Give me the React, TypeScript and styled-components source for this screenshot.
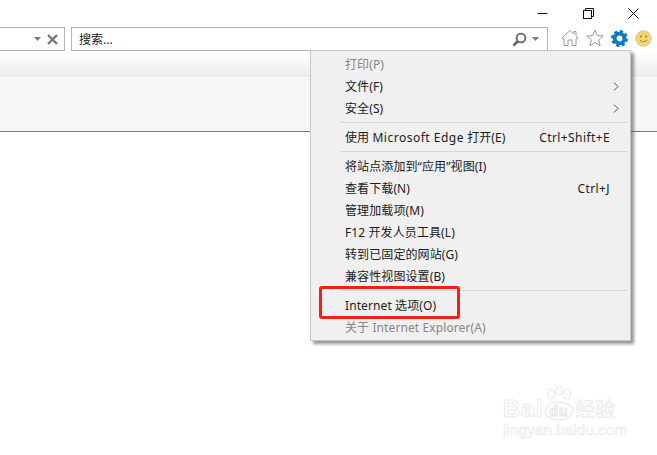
import React from 'react'
import styled, { createGlobalStyle } from 'styled-components'

const GlobalStyle = createGlobalStyle`
  html, body {
    margin: 0;
    padding: 0;
    background: #fff;
  }
  body {
    font-family: "Noto Sans", "Noto Sans CJK SC", sans-serif;
  }
`

const Page = styled.div`
  position: relative;
  width: 657px;
  height: 455px;
  overflow: hidden;
  background: #fff;
`

const WindowBar = styled.div`
  height: 27px;
  display: flex;
  justify-content: flex-end;
  align-items: flex-start;
  padding-right: 1px;
  gap: 0.5px;
`

const WindowButton = styled.button`
  width: 45px;
  height: 27px;
  padding: 0;
  border: 0;
  background: none;
  display: flex;
  align-items: center;
  justify-content: center;
  svg {
    display: block;
  }
`

const NavRow = styled.div`
  height: 24px;
  display: flex;
  align-items: stretch;
`

const AddressBox = styled.div`
  width: 65px;
  box-sizing: border-box;
  border: 1px solid #b4b4b4;
  border-left: 0;
  display: flex;
  align-items: center;
  justify-content: flex-end;
  gap: 6px;
  padding-right: 6px;
  margin-right: 6px;
`

const SearchBox = styled.div`
  width: 477px;
  box-sizing: border-box;
  border: 1px solid #b4b4b4;
  display: flex;
  align-items: center;
  padding: 0 8px 0 7px;
  gap: 5px;
`

const SearchText = styled.span`
  flex: 1;
  font-size: 12px;
  color: #1a1a1a;
`

const ToolIcons = styled.div`
  flex: 1;
  display: flex;
  align-items: center;
  padding: 0 0 2px 13px;
  gap: 7px;
`

const TabStrip = styled.div`
  height: 26px;
  background: linear-gradient(#ffffff, #ececec);
  border-bottom: 1px solid #fafafa;
`

const ContentBand = styled.div`
  height: 53px;
  background: #f6f6f6;
  border-bottom: 1px solid #7a7a7a;
`

const Menu = styled.div`
  position: absolute;
  left: 310px;
  top: 50px;
  width: 321px;
  height: 291px;
  box-sizing: border-box;
  padding: 2px 2px 0 30px;
  background: #f0f0f0;
  border: 1px solid #c6c6c6;
  box-shadow: 3px 3px 3px rgba(60, 60, 60, 0.55);
`

const MenuRow = styled.div<{ $disabled?: boolean }>`
  height: 22px;
  display: flex;
  align-items: center;
  justify-content: space-between;
  padding: 0 18px 0 4px;
  font-size: 12px;
  letter-spacing: 0.1px;
  white-space: nowrap;
  color: ${p => (p.$disabled ? '#868686' : '#1c1c1c')};
`

const Shortcut = styled.span`
  letter-spacing: 0.4px;
`

const WideLatin = styled.span`
  letter-spacing: 0.5px;
`

const Separator = styled.div`
  height: 1px;
  margin: 3px 0;
  background: #d7d7d7;
`

const Arrow = styled.svg`
  margin-right: -9px;
`

const Highlight = styled.div`
  position: absolute;
  left: 8px;
  top: 235px;
  width: 141px;
  height: 33px;
  box-sizing: border-box;
  border: 3px solid #f0201a;
  border-radius: 3px;
`

const Watermark = styled.div`
  position: absolute;
  left: 503px;
  top: 387px;
  width: 125px;
  color: #fff;
  -webkit-text-stroke: 1px #ebebeb;
`

const WatermarkTop = styled.div`
  display: flex;
  align-items: flex-end;
  height: 35px;
  font-family: "Liberation Sans", sans-serif;
  font-weight: 700;
  font-size: 24px;
  line-height: 26px;
  letter-spacing: 1px;
`

const WatermarkCjk = styled.span`
  font-family: "Noto Sans CJK SC", sans-serif;
  font-size: 20px;
  font-weight: 400;
  letter-spacing: 0;
  -webkit-text-stroke: 0.7px #e8e8e8;
`

const WatermarkUrl = styled.div`
  font-family: "Liberation Sans", sans-serif;
  font-size: 15px;
  line-height: 16px;
  letter-spacing: 0.2px;
  -webkit-text-stroke: 0.6px #e8e8e8;
`

const MenuArrow = () => (
  <Arrow width="6" height="9" viewBox="0 0 6 9" fill="none" stroke="#555" strokeWidth="1">
    <path d="M1 0.5 L5 4.5 L1 8.5" />
  </Arrow>
)

const Caret = () => (
  <svg width="7" height="4" viewBox="0 0 7 4" fill="#7c7c7c">
    <path d="M0 0 H7 L3.5 4 Z" />
  </svg>
)

const App: React.FC = () => {
  return (
    <Page>
      <GlobalStyle />
      <WindowBar>
        <WindowButton aria-label="最小化">
          <svg width="11" height="11" viewBox="0 0 11 11" stroke="#111" fill="none">
            <path d="M0.5 5.5 H10.5" />
          </svg>
        </WindowButton>
        <WindowButton aria-label="还原">
          <svg width="11" height="11" viewBox="0 0 11 11" stroke="#111" fill="none">
            <rect x="0.5" y="2.5" width="8" height="8" />
            <path d="M2.5 2.5 V0.5 H10.5 V8.5 H8.5" />
          </svg>
        </WindowButton>
        <WindowButton aria-label="关闭">
          <svg width="11" height="11" viewBox="0 0 11 11" stroke="#111" fill="none">
            <path d="M0.5 0.5 L10.5 10.5 M10.5 0.5 L0.5 10.5" />
          </svg>
        </WindowButton>
      </WindowBar>

      <NavRow>
        <AddressBox>
          <Caret />
          <svg width="11" height="11" viewBox="0 0 11 11" stroke="#777" strokeWidth="2.4" fill="none">
            <path d="M1 1 L10 10 M10 1 L1 10" />
          </svg>
        </AddressBox>
        <SearchBox>
          <SearchText>搜索...</SearchText>
          <svg width="15" height="15" viewBox="0 0 15 15" fill="none" stroke="#666">
            <circle cx="9" cy="6" r="4.4" strokeWidth="1.9" />
            <path d="M6 9 L1.5 13.5" strokeWidth="2.6" />
          </svg>
          <Caret />
        </SearchBox>
        <ToolIcons>
          <svg width="18" height="18" viewBox="0 0 18 18" fill="#fff" stroke="#9a9a9a">
            <path d="M1 9 L9 1.5 L13 5 V2.5 H15 V7 L17 9 L15 10 V16.5 H11 V11 H7 V16.5 H3 V10 Z" />
          </svg>
          <svg width="18" height="18" viewBox="0 0 18 18" fill="#fff" stroke="#9a9a9a">
            <path d="M9 1 L11.3 6.6 L17.2 7 L12.7 10.8 L14.1 16.7 L9 13.6 L3.9 16.7 L5.3 10.8 L0.8 7 L6.7 6.6 Z" />
          </svg>
          <svg width="17" height="17" viewBox="0 0 17 17" fill="none">
            <circle cx="8.5" cy="8.5" r="4.8" stroke="#0f79c9" strokeWidth="3.8" />
            <circle
              cx="8.5"
              cy="8.5"
              r="7"
              stroke="#0f79c9"
              strokeWidth="2.8"
              strokeDasharray="3.2 2.3"
            />
          </svg>
          <svg width="17" height="17" viewBox="0 0 17 17">
            <circle cx="8.5" cy="8.5" r="7.7" fill="#f3d768" stroke="#c9c4a4" />
            <circle cx="6" cy="6.5" r="1.1" fill="#9a8a3a" />
            <circle cx="11" cy="6.5" r="1.1" fill="#9a8a3a" />
            <path d="M4.8 10 Q8.5 13.6 12.2 10" fill="none" stroke="#9a8a3a" />
          </svg>
        </ToolIcons>
      </NavRow>

      <TabStrip />
      <ContentBand />

      <Menu>
        <MenuRow $disabled>打印(P)</MenuRow>
        <MenuRow>
          文件(F)
          <MenuArrow />
        </MenuRow>
        <MenuRow>
          安全(S)
          <MenuArrow />
        </MenuRow>
        <Separator />
        <MenuRow>
          <span>
            使用 <WideLatin>Microsoft Edge</WideLatin> 打开(E)
          </span>
          <Shortcut>Ctrl+Shift+E</Shortcut>
        </MenuRow>
        <Separator />
        <MenuRow>将站点添加到“应用”视图(I)</MenuRow>
        <MenuRow>
          查看下载(N)
          <Shortcut>Ctrl+J</Shortcut>
        </MenuRow>
        <MenuRow>管理加载项(M)</MenuRow>
        <MenuRow>F12 开发人员工具(L)</MenuRow>
        <MenuRow>转到已固定的网站(G)</MenuRow>
        <MenuRow>兼容性视图设置(B)</MenuRow>
        <Separator />
        <MenuRow>Internet 选项(O)</MenuRow>
        <MenuRow $disabled>关于 Internet Explorer(A)</MenuRow>
        <Highlight />
      </Menu>

      <Watermark>
        <WatermarkTop>
          Bai
          <svg width="32" height="35" viewBox="0 0 32 35" fill="#fff" stroke="#e8e8e8" strokeWidth="1.2">
            <ellipse cx="16" cy="24" rx="14" ry="9" />
            <ellipse cx="8" cy="7" rx="3.5" ry="5" />
            <ellipse cx="16" cy="4" rx="3.5" ry="4" />
            <ellipse cx="24" cy="7" rx="3.5" ry="5" />
            <text
              x="16"
              y="29"
              textAnchor="middle"
              fontFamily="Liberation Sans, sans-serif"
              fontWeight="700"
              fontSize="14"
            >
              du
            </text>
          </svg>
          <WatermarkCjk>经验</WatermarkCjk>
        </WatermarkTop>
        <WatermarkUrl>jingyan.baidu.com</WatermarkUrl>
      </Watermark>
    </Page>
  )
}

export default App
